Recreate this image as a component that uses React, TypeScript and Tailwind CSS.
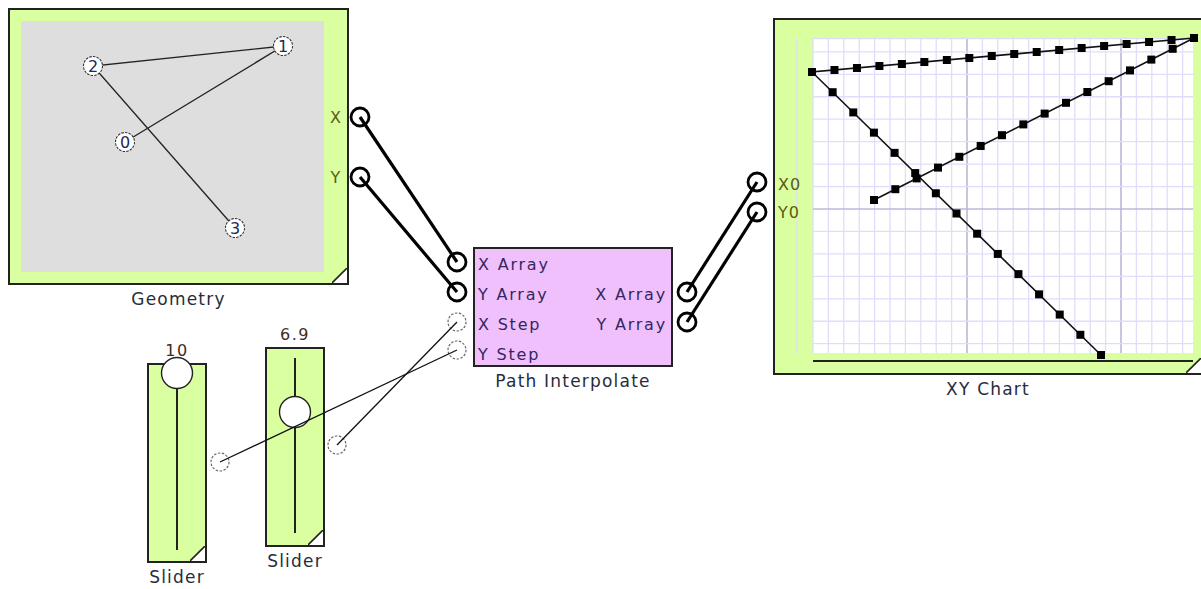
type Pt = [number, number];

// geometry points, in page coordinates
const geo: Pt[] = [
  [125, 142],
  [283, 46],
  [93, 66],
  [235, 228],
];

// chart path (page coordinates) and number of steps on each leg
const chartPath: Pt[] = [
  [874, 200],
  [1194, 38],
  [812, 72],
  [1101, 355],
];
const legSteps = [15, 17, 14];

const dots: Pt[] = [];
chartPath.slice(0, -1).forEach((a, i) => {
  const b = chartPath[i + 1];
  for (let k = 0; k < legSteps[i]; k++) {
    const t = k / legSteps[i];
    dots.push([a[0] + (b[0] - a[0]) * t, a[1] + (b[1] - a[1]) * t]);
  }
});
dots.push(chartPath[chartPath.length - 1]);

const Corner = () => (
  <svg className="absolute bottom-0 right-0" width="15" height="15" viewBox="0 0 15 15">
    <polygon points="0,15 15,0 15,15" fill="#fff" />
    <line x1="0" y1="15" x2="15" y2="0" stroke="#222" strokeWidth="1.6" />
  </svg>
);

const Title = ({ children }: { children: string }) => (
  <div className="mt-[4px] whitespace-nowrap text-[17px] leading-[20px] tracking-[1.2px] text-[#262c3c]">
    {children}
  </div>
);

const GeometryDrawing = () => (
  <svg width="303" height="251" viewBox="0 0 303 251">
    <g transform="translate(-21 -21)">
      <polyline
        points={geo.map((p) => p.join(",")).join(" ")}
        fill="none"
        stroke="#222"
        strokeWidth="1.3"
      />
      {geo.map((p, i) => (
        <g key={i}>
          <circle cx={p[0]} cy={p[1]} r="9.5" fill="#fff" stroke="#333" strokeWidth="1.1" strokeDasharray="2.5 1.2" />
          <text
            x={p[0]}
            y={p[1] + 5.5}
            textAnchor="middle"
            fontSize="16"
            fill="#22285a"
            fontFamily="DejaVu Sans, sans-serif"
          >
            {i}
          </text>
        </g>
      ))}
    </g>
  </svg>
);

const ChartDrawing = () => {
  const vx = Array.from({ length: 25 }, (_, i) => 813 + i * 15.4);
  const hy = Array.from({ length: 14 }, (_, i) => 209 + (i - 7) * 22.45);
  return (
    <svg className="absolute inset-0" width="426" height="353" viewBox="0 0 426 353">
      <g transform="translate(-775 -20)">
        <rect x="813" y="38" width="380" height="315" fill="#fff" />
        <line x1="797" y1="38" x2="797" y2="353" stroke="#e0e0fc" strokeWidth="1.5" />
        {vx.map((x, i) => (
          <line
            key={"v" + i}
            x1={x}
            y1="38"
            x2={x}
            y2="353"
            stroke={i === 10 || i === 20 ? "#b8b8d6" : "#dedefc"}
            strokeWidth={i === 10 || i === 20 ? 1.6 : 1.3}
          />
        ))}
        <line x1="813" y1="38.5" x2="1193" y2="38.5" stroke="#dedefc" strokeWidth="1.3" />
        {hy.map((y, i) => (
          <line
            key={"h" + i}
            x1="813"
            y1={y}
            x2="1193"
            y2={y}
            stroke={i === 7 ? "#b8b8d6" : "#dedefc"}
            strokeWidth={i === 7 ? 1.6 : 1.3}
          />
        ))}
        <line x1="813" y1="361" x2="1193" y2="361" stroke="#222" strokeWidth="2" />
        <polyline
          points={chartPath.map((p) => p.join(",")).join(" ")}
          fill="none"
          stroke="#111"
          strokeWidth="1.6"
        />
        {dots.map((d, i) => (
          <rect key={i} x={d[0] - 4} y={d[1] - 4} width="8" height="8" fill="#000" />
        ))}
      </g>
    </svg>
  );
};

const Slider = ({
  pos,
  value,
  knob,
  trackTop,
  trackBottom,
}: {
  pos: string;
  value: string;
  knob: number;
  trackTop: number;
  trackBottom: number;
}) => (
  <div className={`absolute flex flex-col items-center ${pos}`}>
    <div className="relative h-[200px] w-[60px] border-2 border-[#222] bg-[#d9ffa1]">
      <div className="absolute bottom-full left-0 right-0 mb-[6px] text-center text-[16px] leading-[16px] tracking-[1.5px] text-[#3e2e22]">
        {value}
      </div>
      <svg className="absolute inset-0 overflow-visible" width="56" height="196" viewBox="0 0 56 196">
        <line x1="28" y1={trackTop} x2="28" y2={trackBottom} stroke="#222" strokeWidth="2" />
        <circle cx="28" cy={knob} r="15.5" fill="#fff" stroke="#222" strokeWidth="1.4" />
      </svg>
      <Corner />
    </div>
    <Title>Slider</Title>
  </div>
);

const Port = ({ x, y, light }: { x: number; y: number; light?: boolean }) =>
  light ? (
    <circle cx={x} cy={y} r="9" fill="#fff" stroke="#666" strokeWidth="1.2" strokeDasharray="2.5 1.5" />
  ) : (
    <circle cx={x} cy={y} r="9" fill="#fff" stroke="#000" strokeWidth="2.8" />
  );

const thickWires: [Pt, Pt][] = [
  [[360, 117], [457, 262]],
  [[360, 177], [457, 292]],
  [[687, 292], [757, 182]],
  [[687, 322], [757, 212]],
];
const thinWires: [Pt, Pt][] = [
  [[220, 462], [457, 350]],
  [[337, 445], [457, 322]],
];

export default function App() {
  return (
    <div className="relative h-[589px] w-[1201px] overflow-hidden bg-white font-['DejaVu_Sans',sans-serif]">
      {/* Geometry */}
      <div className="absolute left-[8px] top-[8px] flex flex-col items-center">
        <div className="relative flex h-[277px] w-[341px] border-2 border-[#222] bg-[#d9ffa1] p-[11px] pr-0">
          <div className="h-[251px] w-[303px] bg-[#dedede]">
            <GeometryDrawing />
          </div>
          <div className="flex flex-1 flex-col items-center gap-[40px] pt-[87px] text-[16px] leading-[20px] text-[#5c5c14]">
            <span>X</span>
            <span>Y</span>
          </div>
          <Corner />
        </div>
        <Title>Geometry</Title>
      </div>

      {/* Path Interpolate */}
      <div className="absolute left-[473px] top-[247px] flex flex-col items-center">
        <div className="flex h-[120px] w-[200px] justify-between border-2 border-[#222] bg-[#f0c0fd] pl-[3px] pr-[4px] pt-[1px] text-[16px] leading-[30px] tracking-[1.8px] text-[#362660]">
          <div className="flex flex-col">
            <span>X Array</span>
            <span>Y Array</span>
            <span>X Step</span>
            <span>Y Step</span>
          </div>
          <div className="flex flex-col pt-[30px] text-right">
            <span>X Array</span>
            <span>Y Array</span>
          </div>
        </div>
        <Title>Path Interpolate</Title>
      </div>

      {/* XY Chart */}
      <div className="absolute left-[773px] top-[18px] flex flex-col items-center">
        <div className="relative h-[357px] w-[430px] border-2 border-[#222] bg-[#d9ffa1]">
          <ChartDrawing />
          <div className="relative flex flex-col pl-[3px] pt-[151px] text-[16px] leading-[28px] tracking-[1px] text-[#5c5c14]">
            <span>X0</span>
            <span>Y0</span>
          </div>
          <Corner />
        </div>
        <Title>XY Chart</Title>
      </div>

      <Slider pos="left-[147px] top-[363px]" value="10" knob={8} trackTop={8} trackBottom={185} />
      <Slider pos="left-[265px] top-[347px]" value="6.9" knob={63} trackTop={9} trackBottom={184} />

      {/* wires and ports */}
      <svg className="pointer-events-none absolute inset-0" width="1201" height="589" viewBox="0 0 1201 589">
        <Port x={360} y={117} />
        <Port x={360} y={177} />
        <Port x={457} y={262} />
        <Port x={457} y={292} />
        <Port x={457} y={322} light />
        <Port x={457} y={350} light />
        <Port x={687} y={292} />
        <Port x={687} y={322} />
        <Port x={757} y={182} />
        <Port x={757} y={212} />
        <Port x={220} y={462} light />
        <Port x={337} y={445} light />
        {thickWires.map(([a, b], i) => (
          <line key={"t" + i} x1={a[0]} y1={a[1]} x2={b[0]} y2={b[1]} stroke="#000" strokeWidth="3.2" />
        ))}
        {thinWires.map(([a, b], i) => (
          <line key={"n" + i} x1={a[0]} y1={a[1]} x2={b[0]} y2={b[1]} stroke="#111" strokeWidth="1.3" />
        ))}
      </svg>
    </div>
  );
}
